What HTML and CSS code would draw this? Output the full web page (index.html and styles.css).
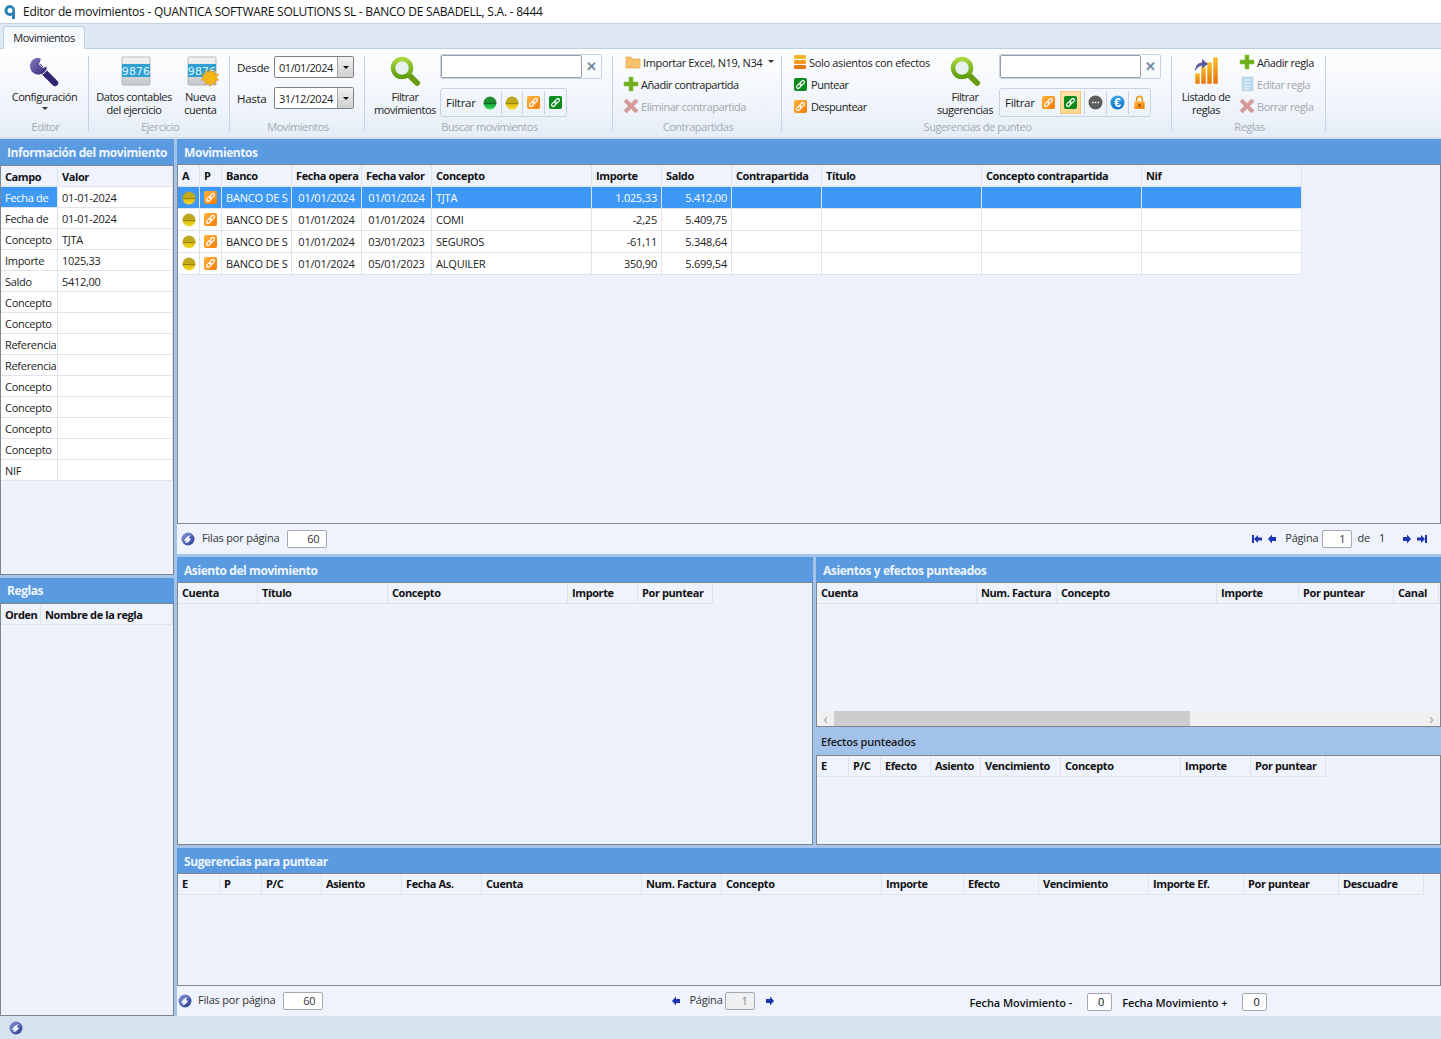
FILE: index.html
```html
<!DOCTYPE html>
<html lang="es">

<head>
    <meta charset="UTF-8">
    <title>Editor de movimientos</title>
    <link rel="stylesheet" href="styles.css">
</head>

<body>
    <!-- Iconos -->
    <svg class="defs" aria-hidden="true">
        <defs>
            <linearGradient id="gYellow" x1="0" y1="0" x2="0" y2="1">
                <stop offset="0" stop-color="#b9a52c"/><stop offset=".48" stop-color="#c4ab14"/><stop offset=".55" stop-color="#8d7c10"/><stop offset=".62" stop-color="#e0bf0c"/><stop offset="1" stop-color="#f4dc30"/>
            </linearGradient>
            <linearGradient id="gGreen" x1="0" y1="0" x2="0" y2="1">
                <stop offset="0" stop-color="#2c8f3c"/><stop offset=".48" stop-color="#1c8a30"/><stop offset=".55" stop-color="#0d5f20"/><stop offset=".62" stop-color="#18b03c"/><stop offset="1" stop-color="#3ada5c"/>
            </linearGradient>
            <linearGradient id="gOrange" x1="0" y1="0" x2="1" y2="1">
                <stop offset="0" stop-color="#ffb340"/><stop offset="1" stop-color="#f57c00"/>
            </linearGradient>
            <linearGradient id="gBar" x1="0" y1="0" x2="0" y2="1">
                <stop offset="0" stop-color="#fbc02d"/><stop offset="1" stop-color="#e8710a"/>
            </linearGradient>
            <linearGradient id="gLens" x1="0" y1="0" x2="0" y2="1">
                <stop offset="0" stop-color="#a8d63c"/><stop offset="1" stop-color="#5f9e12"/>
            </linearGradient>
            <linearGradient id="gBlue" x1="0" y1="0" x2="0" y2="1">
                <stop offset="0" stop-color="#3aa8e8"/><stop offset="1" stop-color="#0f6fc0"/>
            </linearGradient>
            <linearGradient id="gGlobe" x1="0" y1="0" x2="1" y2="1">
                <stop offset="0" stop-color="#8a98d8"/><stop offset="1" stop-color="#24378f"/>
            </linearGradient>
            <linearGradient id="gPurple" x1="0" y1="0" x2="1" y2="1">
                <stop offset="0" stop-color="#8a7cc4"/><stop offset="1" stop-color="#2f2570"/>
            </linearGradient>
            <linearGradient id="gSilver" x1="0" y1="0" x2="0" y2="1">
                <stop offset="0" stop-color="#f4f4f4"/><stop offset="1" stop-color="#c4c7ca"/>
            </linearGradient>
            <g id="chain">
                <g transform="rotate(-45 6.500 6.500)" fill="none" stroke="#fff" stroke-width="1.200">
                    <rect x="1.500" y="5" width="5.500" height="3" rx="1.500"/>
                    <rect x="6" y="5" width="5.500" height="3" rx="1.500"/>
                </g>
            </g>
        </defs>
        <symbol id="i-wrench" viewBox="0 0 32 32">
            <path d="M10 12 26 28" stroke="#fff" stroke-width="9" stroke-linecap="round"/>
            <path d="M10 12 26 28" stroke="#2f2570" stroke-width="6.500" stroke-linecap="round"/>
            <path d="M7 2.500A9 9 0 1 0 18.500 11l-5 1.500-3-3 2-6A9 9 0 0 0 7 2.500z" fill="url(#gPurple)" stroke="#fff" stroke-width="1"/>
        </symbol>
        <symbol id="i-card" viewBox="0 0 32 32">
            <rect x="2" y="2" width="28" height="28" rx="1" fill="url(#gSilver)" stroke="#b4b8bc"/>
            <rect x="2" y="9" width="28" height="13" fill="#2f9fd2"/>
        </symbol>
        <symbol id="i-star" viewBox="0 0 18 18">
            <path d="M9 0l1.600 3.600L14 1.500l-.5 4 4.500-.2-2.800 3 2.800 2.900-4.100.4.700 4.200-3.600-2-2 3.600-1.600-3.800-3.600 2 .6-4.200L0 11l3-2.800L.4 5.200l4.200.2L4 1.500l3.400 2.100z" fill="#f5b50f" stroke="#e08a00" stroke-width=".5"/>
        </symbol>
        <symbol id="i-lens" viewBox="0 0 32 32">
            <path d="M20 20 28 28" stroke="#6a9c18" stroke-width="6" stroke-linecap="round"/>
            <circle cx="13" cy="13" r="9" fill="#e8f0ee" stroke="url(#gLens)" stroke-width="4.500"/>
        </symbol>
        <symbol id="i-coin" viewBox="0 0 14 14"><circle cx="7" cy="7" r="6.500" fill="url(#gYellow)"/></symbol>
        <symbol id="i-green" viewBox="0 0 14 14"><circle cx="7" cy="7" r="6.500" fill="url(#gGreen)"/></symbol>
        <symbol id="i-link-o" viewBox="0 0 13 13">
            <rect width="13" height="13" rx="2" fill="url(#gOrange)"/>
            <use href="#chain"/>
        </symbol>
        <symbol id="i-link-g" viewBox="0 0 13 13">
            <rect width="13" height="13" rx="2" fill="#0a8a1a"/>
            <use href="#chain"/>
        </symbol>
        <symbol id="i-plus" viewBox="0 0 16 16">
            <path d="M6 1h4v5h5v4h-5v5H6v-5H1V6h5z" fill="#6fae1e" stroke="#8cc63f" stroke-width=".6"/>
        </symbol>
        <symbol id="i-cross" viewBox="0 0 16 16">
            <path d="M3.500 1 8 5.500 12.500 1 15 3.500 10.500 8 15 12.500 12.500 15 8 10.500 3.500 15 1 12.500 5.500 8 1 3.500z" fill="#d69a9a" stroke="#c98888" stroke-width=".5"/>
        </symbol>
        <symbol id="i-folder" viewBox="0 0 16 16">
            <path d="M1 3h5l1 2h8v9H1z" fill="#f5c26b" stroke="#e0a040" stroke-width=".6"/>
        </symbol>
        <symbol id="i-stack" viewBox="0 0 14 16">
            <rect x="1" y="1" width="12" height="4" rx="1.500" fill="#f9b52c"/>
            <rect x="1" y="6" width="12" height="4" rx="1.500" fill="#f59a1c"/>
            <rect x="1" y="11" width="12" height="4" rx="1.500" fill="#e8760c"/>
        </symbol>
        <symbol id="i-chart" viewBox="0 0 32 32">
            <rect x="5" y="18" width="5" height="11" fill="url(#gBar)" stroke="#fff" stroke-width=".5"/>
            <rect x="11" y="12" width="5" height="17" fill="url(#gBar)" stroke="#fff" stroke-width=".5"/>
            <rect x="17" y="7" width="5" height="22" fill="url(#gBar)" stroke="#fff" stroke-width=".5"/>
            <rect x="23" y="2" width="5" height="27" fill="url(#gBar)" stroke="#fff" stroke-width=".5"/>
            <path d="M5 16c0-5 3-8 7-8.500V4l6 5-6 4.500V10.500c-3 .5-5 2.500-7 5.500z" fill="#5c5a9c"/>
        </symbol>
        <symbol id="i-doc" viewBox="0 0 14 16">
            <rect x="2" y="1" width="11" height="14" fill="#b5d6ee" stroke="#cfdce6"/>
            <path d="M4 4h7M4 7h7M4 10h7M4 13h5" stroke="#f2f8fc"/>
        </symbol>
        <symbol id="i-dots" viewBox="0 0 15 15">
            <circle cx="7.500" cy="7.500" r="7" fill="#5d5d5d"/>
            <path d="M4 7.500h1.500M6.800 7.500h1.500M9.600 7.500h1.500" stroke="#fff" stroke-width="1.500"/>
        </symbol>
        <symbol id="i-lock" viewBox="0 0 13 16">
            <path d="M3.500 7V4.500a3 3 0 0 1 6 0V7" fill="none" stroke="#e8a020" stroke-width="1.800"/>
            <rect x="1" y="7" width="11" height="8" rx="1" fill="url(#gOrange)"/>
            <rect x="5.500" y="9.500" width="2" height="3" fill="#8a4a00"/>
        </symbol>
        <symbol id="i-globe" viewBox="0 0 14 14">
            <circle cx="7" cy="7" r="6.500" fill="url(#gGlobe)"/>
            <path d="M3 9c1-3 3-5 7-6-1 1-2 2-2 3l2 1c-1 2-3 4-6 4 1-1 1-2 1-2z" fill="#eef2ff"/>
        </symbol>
        <symbol id="i-first" viewBox="0 0 12 10"><path d="M1 1h2v8H1zM3 5l4-4v2.500h4v3H7V9z" fill="#1c35b0"/></symbol>
        <symbol id="i-prev" viewBox="0 0 10 10"><path d="M1 5l4-4.500V3h4v4H5v2.500z" fill="#1c35b0"/></symbol>
        <symbol id="i-next" viewBox="0 0 10 10"><path d="M9 5L5 .5V3H1v4h4v2.500z" fill="#1c35b0"/></symbol>
        <symbol id="i-last" viewBox="0 0 12 10"><path d="M11 1H9v8h2zM9 5L5 1v2.500H1v3h4V9z" fill="#1c35b0"/></symbol>
    </svg>

    <div class="titlebar">
        <svg class="app-logo" viewBox="0 0 14 16">
            <path d="M7 1a5.500 5.500 0 1 0 2 10.600V15h3V6.500A5.500 5.500 0 0 0 7 1zm0 3a2.500 2.500 0 1 1 0 5 2.500 2.500 0 0 1 0-5z" fill="#2d7fb8"/>
        </svg>
        <span>Editor de movimientos - QUANTICA SOFTWARE SOLUTIONS SL - BANCO DE SABADELL, S.A. - 8444</span>
    </div>

    <div class="tabstrip">
        <div class="tab">Movimientos</div>
    </div>

    <div class="ribbon">
        <section class="group g-editor">
            <div class="group-body center">
                <div class="bigbtn">
                    <svg class="ico32"><use href="#i-wrench"/></svg>
                    <span>Configuración</span>
                    <span class="caret"></span>
                </div>
            </div>
            <div class="group-label">Editor</div>
        </section>

        <section class="group g-ejercicio">
            <div class="group-body center gap-ej">
                <div class="bigbtn">
                    <svg class="ico32 card-a" viewBox="0 0 32 32"><use href="#i-card"/><text x="16" y="20" text-anchor="middle" class="card-num">9876</text></svg>
                    <span>Datos contables<br>del ejercicio</span>
                </div>
                <div class="bigbtn">
                    <span class="stacked">
                        <svg class="ico32" viewBox="0 0 32 32"><use href="#i-card"/><text x="16" y="20" text-anchor="middle" class="card-num">9876</text></svg>
                        <svg class="star"><use href="#i-star"/></svg>
                    </span>
                    <span>Nueva<br>cuenta</span>
                </div>
            </div>
            <div class="group-label">Ejercicio</div>
        </section>

        <section class="group g-fechas">
            <div class="group-body dates">
                <div class="date-row">
                    <label>Desde</label>
                    <div class="datebox"><span>01/01/2024</span><i class="drop"></i></div>
                </div>
                <div class="date-row">
                    <label>Hasta</label>
                    <div class="datebox"><span>31/12/2024</span><i class="drop"></i></div>
                </div>
            </div>
            <div class="group-label">Movimientos</div>
        </section>

        <section class="group g-buscar">
            <div class="group-body search-body">
                <div class="bigbtn w-filter">
                    <svg class="ico32"><use href="#i-lens"/></svg>
                    <span>Filtrar<br>movimientos</span>
                </div>
                <div class="search-col">
                    <div class="searchbox"><div class="search-input"></div><div class="search-clear">✕</div></div>
                    <div class="filterbar fb-mov">
                        <span class="fb-label">Filtrar</span>
                        <span class="fb-item"><svg class="ico14"><use href="#i-green"/></svg></span>
                        <span class="fb-item"><svg class="ico14"><use href="#i-coin"/></svg></span>
                        <span class="fb-item"><svg class="ico13"><use href="#i-link-o"/></svg></span>
                        <span class="fb-item"><svg class="ico13"><use href="#i-link-g"/></svg></span>
                    </div>
                </div>
            </div>
            <div class="group-label">Buscar movimientos</div>
        </section>

        <section class="group g-contra">
            <div class="group-body list-body">
                <div class="listbtn folder"><svg class="ico16"><use href="#i-folder"/></svg><span>Importar Excel, N19, N34</span><i class="caret-small"></i></div>
                <div class="listbtn"><svg class="ico16"><use href="#i-plus"/></svg><span>Añadir contrapartida</span></div>
                <div class="listbtn off"><svg class="ico16"><use href="#i-cross"/></svg><span>Eliminar contrapartida</span></div>
            </div>
            <div class="group-label">Contrapartidas</div>
        </section>

        <section class="group g-sug">
            <div class="group-body search-body">
                <div class="list-body sug-list">
                    <div class="listbtn stackbtn"><svg class="ico16"><use href="#i-stack"/></svg><span>Solo asientos con efectos</span></div>
                    <div class="listbtn"><svg class="ico13"><use href="#i-link-g"/></svg><span>Puntear</span></div>
                    <div class="listbtn"><svg class="ico13"><use href="#i-link-o"/></svg><span>Despuntear</span></div>
                </div>
                <div class="bigbtn w-filter2">
                    <svg class="ico32"><use href="#i-lens"/></svg>
                    <span>Filtrar<br>sugerencias</span>
                </div>
                <div class="search-col">
                    <div class="searchbox"><div class="search-input"></div><div class="search-clear">✕</div></div>
                    <div class="filterbar fb-sug">
                        <span class="fb-label">Filtrar</span>
                        <span class="fb-item"><svg class="ico13"><use href="#i-link-o"/></svg></span>
                        <span class="fb-item active"><svg class="ico13"><use href="#i-link-g"/></svg></span>
                        <span class="fb-item"><svg class="ico15"><use href="#i-dots"/></svg></span>
                        <span class="fb-item"><svg class="ico15" viewBox="0 0 15 15"><circle cx="7.500" cy="7.500" r="7" fill="url(#gBlue)"/><text x="7.500" y="11.500" text-anchor="middle" class="euro-sign">€</text></svg></span>
                        <span class="fb-item"><svg class="ico15"><use href="#i-lock"/></svg></span>
                    </div>
                </div>
            </div>
            <div class="group-label">Sugerencias de punteo</div>
        </section>

        <section class="group g-reglas">
            <div class="group-body search-body">
                <div class="bigbtn w-listado">
                    <svg class="ico32"><use href="#i-chart"/></svg>
                    <span>Listado de<br>reglas</span>
                </div>
                <div class="list-body reglas-list">
                    <div class="listbtn"><svg class="ico16"><use href="#i-plus"/></svg><span>Añadir regla</span></div>
                    <div class="listbtn off"><svg class="ico16"><use href="#i-doc"/></svg><span>Editar regla</span></div>
                    <div class="listbtn off"><svg class="ico16"><use href="#i-cross"/></svg><span>Borrar regla</span></div>
                </div>
            </div>
            <div class="group-label">Reglas</div>
        </section>
    </div>

    <div class="workspace">
        <aside class="left">
            <div class="panel p-info">
                <h2>Información del movimiento</h2>
                <div class="gridbox">
                    <table class="grid">
                        <colgroup><col class="w57"><col class="w115"></colgroup>
                        <thead><tr><th>Campo</th><th>Valor</th></tr></thead>
                        <tbody class="rows21">
                            <tr><td class="sel">Fecha de</td><td>01-01-2024</td></tr>
                            <tr><td>Fecha de</td><td>01-01-2024</td></tr>
                            <tr><td>Concepto</td><td>TJTA</td></tr>
                            <tr><td>Importe</td><td>1025,33</td></tr>
                            <tr><td>Saldo</td><td>5412,00</td></tr>
                            <tr><td>Concepto</td><td></td></tr>
                            <tr><td>Concepto</td><td></td></tr>
                            <tr><td>Referencia</td><td></td></tr>
                            <tr><td>Referencia</td><td></td></tr>
                            <tr><td>Concepto</td><td></td></tr>
                            <tr><td>Concepto</td><td></td></tr>
                            <tr><td>Concepto</td><td></td></tr>
                            <tr><td>Concepto</td><td></td></tr>
                            <tr><td>NIF</td><td></td></tr>
                        </tbody>
                    </table>
                </div>
            </div>
            <div class="panel p-reglas">
                <h2>Reglas</h2>
                <div class="gridbox">
                    <table class="grid">
                        <colgroup><col class="w40"><col class="w132"></colgroup>
                        <thead><tr><th>Orden</th><th>Nombre de la regla</th></tr></thead>
                    </table>
                </div>
            </div>
        </aside>

        <main class="right">
            <div class="panel p-mov">
                <h2>Movimientos</h2>
                <div class="gridbox">
                    <table class="grid g-mov">
                        <colgroup>
                            <col class="w22"><col class="w22"><col class="w70"><col class="w70"><col class="w70"><col class="w160"><col class="w70"><col class="w70"><col class="w90"><col class="w160"><col class="w160"><col class="w160">
                        </colgroup>
                        <thead>
                            <tr><th>A</th><th>P</th><th>Banco</th><th>Fecha opera</th><th>Fecha valor</th><th>Concepto</th><th>Importe</th><th>Saldo</th><th>Contrapartida</th><th>Título</th><th>Concepto contrapartida</th><th>Nif</th></tr>
                        </thead>
                        <tbody class="rows22">
                            <tr class="sel">
                                <td class="ic"><svg class="ico14"><use href="#i-coin"/></svg></td><td class="ic"><svg class="ico13"><use href="#i-link-o"/></svg></td>
                                <td>BANCO DE S</td><td class="mid">01/01/2024</td><td class="mid">01/01/2024</td><td>TJTA</td><td class="num">1.025,33</td><td class="num">5.412,00</td><td></td><td></td><td></td><td></td>
                            </tr>
                            <tr>
                                <td class="ic"><svg class="ico14"><use href="#i-coin"/></svg></td><td class="ic"><svg class="ico13"><use href="#i-link-o"/></svg></td>
                                <td>BANCO DE S</td><td class="mid">01/01/2024</td><td class="mid">01/01/2024</td><td>COMI</td><td class="num">-2,25</td><td class="num">5.409,75</td><td></td><td></td><td></td><td></td>
                            </tr>
                            <tr>
                                <td class="ic"><svg class="ico14"><use href="#i-coin"/></svg></td><td class="ic"><svg class="ico13"><use href="#i-link-o"/></svg></td>
                                <td>BANCO DE S</td><td class="mid">01/01/2024</td><td class="mid">03/01/2023</td><td>SEGUROS</td><td class="num">-61,11</td><td class="num">5.348,64</td><td></td><td></td><td></td><td></td>
                            </tr>
                            <tr>
                                <td class="ic"><svg class="ico14"><use href="#i-coin"/></svg></td><td class="ic"><svg class="ico13"><use href="#i-link-o"/></svg></td>
                                <td>BANCO DE S</td><td class="mid">01/01/2024</td><td class="mid">05/01/2023</td><td>ALQUILER</td><td class="num">350,90</td><td class="num">5.699,54</td><td></td><td></td><td></td><td></td>
                            </tr>
                        </tbody>
                    </table>
                </div>
                <div class="pager">
                    <svg class="ico14 globe"><use href="#i-globe"/></svg>
                    <span class="pg-label">Filas por página</span>
                    <span class="numbox ml8">60</span>
                    <span class="pager-right">
                        <svg class="arrow-w"><use href="#i-first"/></svg>
                        <svg class="arrow-n"><use href="#i-prev"/></svg>
                        <span class="pg-label ml6">Página</span>
                        <span class="numbox page">1</span>
                        <span class="pg-label">de</span>
                        <span class="pg-label ml9">1</span>
                        <svg class="arrow-n ml17"><use href="#i-next"/></svg>
                        <svg class="arrow-w"><use href="#i-last"/></svg>
                    </span>
                </div>
            </div>

            <div class="mid-row">
                <div class="panel p-asiento">
                    <h2>Asiento del movimiento</h2>
                    <div class="gridbox">
                        <table class="grid">
                            <colgroup><col class="w80"><col class="w130"><col class="w180"><col class="w70"><col class="w75"></colgroup>
                            <thead><tr><th>Cuenta</th><th>Título</th><th>Concepto</th><th>Importe</th><th>Por puntear</th></tr></thead>
                        </table>
                    </div>
                </div>
                <div class="panel p-efectos">
                    <h2>Asientos y efectos punteados</h2>
                    <div class="gridbox gb-top">
                        <table class="grid">
                            <colgroup><col class="w160"><col class="w80"><col class="w160"><col class="w82"><col class="w95"><col class="w45"></colgroup>
                            <thead><tr><th>Cuenta</th><th>Num. Factura</th><th>Concepto</th><th>Importe</th><th>Por puntear</th><th>Canal</th></tr></thead>
                        </table>
                        <div class="hscroll">
                            <span class="hs-arrow">‹</span>
                            <span class="hs-thumb"></span>
                            <span class="hs-arrow hs-end">›</span>
                        </div>
                    </div>
                    <h3>Efectos punteados</h3>
                    <div class="gridbox gb-bottom">
                        <table class="grid">
                            <colgroup><col class="w32"><col class="w32"><col class="w50"><col class="w50"><col class="w80"><col class="w120"><col class="w70"><col class="w75"></colgroup>
                            <thead><tr><th>E</th><th>P/C</th><th>Efecto</th><th>Asiento</th><th>Vencimiento</th><th>Concepto</th><th>Importe</th><th>Por puntear</th></tr></thead>
                        </table>
                    </div>
                </div>
            </div>

            <div class="panel p-sug">
                <h2>Sugerencias para puntear</h2>
                <div class="gridbox">
                    <table class="grid">
                        <colgroup>
                            <col class="w42"><col class="w42"><col class="w60"><col class="w80"><col class="w80"><col class="w160"><col class="w80"><col class="w160"><col class="w82"><col class="w75"><col class="w110"><col class="w95"><col class="w95"><col class="w85">
                        </colgroup>
                        <thead><tr><th>E</th><th>P</th><th>P/C</th><th>Asiento</th><th>Fecha As.</th><th>Cuenta</th><th>Num. Factura</th><th>Concepto</th><th>Importe</th><th>Efecto</th><th>Vencimiento</th><th>Importe Ef.</th><th>Por puntear</th><th>Descuadre</th></tr></thead>
                    </table>
                </div>
                <div class="pager pager-sug">
                    <svg class="ico14"><use href="#i-globe"/></svg>
                    <span class="pg-label ml6">Filas por página</span>
                    <span class="numbox ml8">60</span>
                    <span class="pager-mid">
                        <svg class="arrow-n"><use href="#i-prev"/></svg>
                        <span class="pg-label ml6">Página</span>
                        <span class="numbox page off">1</span>
                        <svg class="arrow-n ml10"><use href="#i-next"/></svg>
                    </span>
                    <span class="pager-dates">
                        <b>Fecha Movimiento -</b>
                        <span class="numbox small">0</span>
                        <b class="ml10">Fecha Movimiento +</b>
                        <span class="numbox small">0</span>
                    </span>
                </div>
            </div>
        </main>
    </div>

    <footer class="statusbar">
        <svg class="ico14"><use href="#i-globe"/></svg>
    </footer>
</body>

</html>
```

FILE: styles.css
```css
* {
    box-sizing: border-box;
}

html, body {
    margin: 0;
    padding: 0;
}

body {
    width: 1441px;
    height: 1039px;
    overflow: hidden;
    display: flex;
    flex-direction: column;
    font-family: "Open Sans", "Noto Sans", sans-serif;
    font-size: 11px;
    letter-spacing: -0.2px;
    color: #1a1a1a;
    background-color: #d7e2ef;
}

.defs {
    display: block;
    width: 0;
    height: 0;
}

.card-num {
    font-family: "DejaVu Sans", sans-serif;
    font-size: 11px;
    letter-spacing: 0.1px;
    fill: #dff4ff;
}

.euro-sign {
    font-family: "Liberation Sans", sans-serif;
    font-size: 12px;
    font-weight: bold;
    letter-spacing: 0;
    fill: #fff;
}

.ico32 { width: 32px; height: 32px; display: block; }
.ico16 { width: 16px; height: 16px; flex: none; }
.ico15 { width: 15px; height: 15px; flex: none; }
.ico14 { width: 14px; height: 14px; flex: none; }
.ico13 { width: 13px; height: 13px; flex: none; }

/* Titelzeile */
.titlebar {
    height: 24px;
    flex: none;
    display: flex;
    align-items: center;
    gap: 6px;
    padding-left: 3px;
    background-color: #fff;
    font-size: 12px;
    letter-spacing: -0.24px;
    color: #111;
    border-bottom: 1px solid #c6d3e3;
}

.app-logo {
    width: 14px;
    height: 16px;
}

.tabstrip {
    height: 25px;
    flex: none;
    padding: 2px 0 0 3px;
    background-color: #dfe8f3;
    border-bottom: 1px solid #b9cde4;
}

.tab {
    width: 82px;
    height: 23px;
    line-height: 22px;
    text-align: center;
    letter-spacing: -0.45px;
    background: linear-gradient(#f2f6fb, #fafcfe);
    border: 1px solid #c0d0e4;
    border-bottom: none;
    border-radius: 3px 3px 0 0;
    color: #222;
}

/* Ribbon */
.ribbon {
    height: 90px;
    flex: none;
    display: flex;
    padding-top: 7px;
    letter-spacing: -0.45px;
    background: linear-gradient(#fefefe, #f1f5fb 60%, #e6edf7);
    border-bottom: 2px solid #d4e0ee;
}

.group {
    display: flex;
    flex-direction: column;
    height: 75px;
    border-right: 1px solid #c3d2e4;
}

.group-body {
    flex: none;
    height: 64px;
    margin-top: -1px;
    display: flex;
}

.center {
    justify-content: center;
}

.group-label {
    height: 12px;
    line-height: 16px;
    padding-left: 2px;
    text-align: center;
    white-space: nowrap;
    color: #a3abb5;
}

.g-editor { width: 89px; padding-left: 1px; }
.g-ejercicio { width: 141px; }
.g-fechas { width: 135px; }
.g-buscar { width: 248px; }
.g-contra { width: 169px; }
.g-sug { width: 390px; }
.g-reglas { width: 154px; }

.gap-ej {
    gap: 11px;
    padding-right: 4px;
}

.card-a {
    margin-left: 5px;
}

.bigbtn {
    display: flex;
    flex-direction: column;
    align-items: center;
    text-align: center;
    line-height: 12.500px;
    gap: 4px;
    color: #222;
}

.stacked {
    display: flex;
    margin-left: 3px;
    position: relative;
}

.star {
    position: absolute;
    right: -1px;
    bottom: 0;
    width: 18px;
    height: 18px;
}

.caret {
    width: 0;
    height: 0;
    margin-top: -1px;
    border: 3px solid transparent;
    border-top-color: #333;
}

.caret-small {
    width: 0;
    height: 0;
    margin: 2px 0 0 4px;
    border: 3px solid transparent;
    border-top-color: #333;
}

.dates {
    flex-direction: column;
    gap: 9px;
    padding: 1px 0 0 7px;
}

.date-row {
    display: flex;
    align-items: center;
    justify-content: space-between;
    width: 117px;
    letter-spacing: -0.45px;
}

.date-row label {
    font-size: 11.500px;
    letter-spacing: -0.3px;
}

.datebox {
    width: 80px;
    height: 22px;
    display: flex;
    align-items: center;
    padding-left: 4px;
    background-color: #fff;
    border: 1px solid #7d8288;
    border-radius: 2px;
}

.datebox span {
    flex: 1;
}

.drop {
    width: 16px;
    height: 20px;
    display: flex;
    align-items: center;
    justify-content: center;
    background: linear-gradient(#f2f2f2, #cfcfcf);
    border-left: 1px solid #a0a4a8;
}

.drop::after {
    content: "";
    margin-top: 3px;
    border: 3.500px solid transparent;
    border-top-color: #111;
}

.search-body {
    gap: 5px;
}

.w-filter {
    width: 60px;
    margin-left: 10px;
}

.w-filter2 {
    width: 60px;
    margin-right: -1px;
}

.search-col {
    display: flex;
    flex-direction: column;
    gap: 9px;
    margin-top: -1px;
}

.searchbox {
    width: 162px;
    height: 25px;
    display: flex;
    border: 1px solid #c5d3e5;
    border-radius: 2px;
}

.search-input {
    width: 141px;
    background-color: #fff;
    border: 1px solid #9a9ea4;
    border-radius: 2px;
}

.search-clear {
    flex: 1;
    text-align: center;
    line-height: 23px;
    font-size: 13px;
    font-weight: bold;
    color: #6f8aa2;
}

.filterbar {
    height: 29px;
    display: flex;
    align-items: center;
    padding-left: 5px;
    border: 1px solid #c5d3e5;
    border-radius: 3px;
}

.fb-mov { width: 127px; }
.fb-sug { width: 152px; }

.fb-label {
    width: 33px;
    font-size: 11.500px;
    letter-spacing: -0.3px;
}

.fb-item {
    width: 22px;
    height: 23px;
    display: flex;
    align-items: center;
    justify-content: center;
    border-left: 1px solid #c5d3e5;
}

.fb-label + .fb-item {
    border-left: none;
}

.fb-item.active {
    margin-right: 3px;
    background: linear-gradient(#fde3a8, #fbd68c);
    border: 1px solid #f5c57a;
}

.list-body {
    display: flex;
    flex-direction: column;
    gap: 6px;
    margin-top: -1px;
}

.group-body.list-body {
    margin-top: -2px;
    height: 65px;
}

.g-contra .list-body {
    padding-left: 10px;
}

.sug-list {
    width: 148px;
    padding-left: 10px;
}

.reglas-list {
    margin-left: -2px;
}

.listbtn {
    height: 16px;
    display: flex;
    align-items: center;
    gap: 2px;
    color: #222;
    white-space: nowrap;
}

.listbtn.off {
    color: #a2a6ac;
}

.listbtn.folder {
    padding-left: 2px;
    gap: 2px;
    letter-spacing: -0.35px;
}

.sug-list .listbtn {
    gap: 4px;
    padding-left: 2px;
}

.sug-list .stackbtn {
    gap: 1px;
    padding-left: 0;
    letter-spacing: -0.33px;
}

.w-listado {
    width: 60px;
    margin-left: 4px;
}

/* Arbeitsbereich */
.workspace {
    flex: 1;
    min-height: 0;
    display: flex;
    gap: 3px;
    background-color: #a6c4ea;
}

.left {
    width: 174px;
    flex: none;
    display: flex;
    flex-direction: column;
    gap: 3px;
}

.right {
    flex: 1;
    min-width: 0;
    display: flex;
    flex-direction: column;
    gap: 3px;
}

.panel {
    display: flex;
    flex-direction: column;
    min-height: 0;
    background-color: #eef3fd;
}

.panel h2 {
    height: 25px;
    flex: none;
    margin: 0;
    padding-left: 7px;
    line-height: 27px;
    font-size: 12px;
    font-weight: 700;
    letter-spacing: -0.42px;
    white-space: nowrap;
    color: #eef5fe;
    background-color: #5a9ae0;
}

.p-info h2 {
    height: 26px;
}

.p-reglas h2 {
    line-height: 25px;
}

.panel h3 {
    height: 28px;
    flex: none;
    margin: 0;
    padding-left: 5px;
    line-height: 30px;
    font-size: 11px;
    font-weight: 600;
    color: #1a1a1a;
    background-color: #a3c2ea;
}

.p-info { height: 436px; }
.p-reglas { flex: 1; }
.p-mov { height: 415px; }
.p-sug { flex: 1; }

.mid-row {
    height: 288px;
    flex: none;
    display: flex;
    gap: 3px;
}

.p-asiento { width: 636px; flex: none; }
.p-efectos { flex: 1; min-width: 0; }

.gridbox {
    flex: 1;
    min-height: 0;
    overflow: hidden;
    background-color: #edf2fb;
    border: 1px solid #7f868e;
}

.gb-top {
    display: flex;
    flex-direction: column;
    flex: none;
    height: 145px;
}

.gb-bottom {
    flex: 1;
}

.grid {
    table-layout: fixed;
    border-collapse: separate;
    border-spacing: 0;
    width: min-content;
}

.grid th,
.grid td {
    padding: 0 4px;
    text-align: left;
    white-space: nowrap;
    overflow: hidden;
    border-right: 1px solid #dfe3ec;
    border-bottom: 1px solid #dfe3ec;
}

.grid th {
    height: 21px;
    font-weight: 700;
    letter-spacing: -0.4px;
    color: #111;
    background-color: #eef3fd;
}

.g-mov th {
    height: 22px;
    padding-bottom: 1px;
}

.mid-row .grid th,
.p-sug .grid th {
    padding-bottom: 2px;
}

.grid td {
    background-color: #fff;
    color: #222;
    letter-spacing: -0.3px;
}

.g-mov td {
    letter-spacing: -0.2px;
}

.rows21 td { height: 21px; }
.rows22 td { height: 22px; }

.grid td.sel,
.grid tr.sel td {
    background-color: #3d99f5;
    color: #fff;
}

.grid .num { text-align: right; }
.grid .mid { text-align: center; }

.grid .ic {
    padding: 0;
    text-align: center;
}

.grid .ic svg {
    display: block;
    margin: 0 auto;
}

.w22 { width: 22px; }
.w32 { width: 32px; }
.w40 { width: 40px; }
.w42 { width: 42px; }
.w45 { width: 45px; }
.w50 { width: 50px; }
.w57 { width: 57px; }
.w60 { width: 60px; }
.w70 { width: 70px; }
.w75 { width: 75px; }
.w80 { width: 80px; }
.w82 { width: 82px; }
.w85 { width: 85px; }
.w90 { width: 90px; }
.w95 { width: 95px; }
.w110 { width: 110px; }
.w115 { width: 115px; }
.w120 { width: 120px; }
.w130 { width: 130px; }
.w132 { width: 132px; }
.w160 { width: 160px; }
.w180 { width: 180px; }

.hscroll {
    height: 15px;
    margin-top: auto;
    display: flex;
    align-items: center;
    background-color: #f0f0f0;
    color: #a0a0a0;
}

.hs-arrow {
    width: 17px;
    text-align: center;
    font-size: 14px;
    line-height: 14px;
}

.hs-thumb {
    width: 356px;
    height: 15px;
    background-color: #cdcdcd;
}

.hs-end {
    margin-left: auto;
}

/* Pager */
.pager {
    height: 30px;
    flex: none;
    display: flex;
    align-items: center;
    padding: 0 11px 0 4px;
    color: #333;
}

.pg-label {
    margin-top: -3px;
}

.globe {
    margin-right: 7px;
}

.numbox {
    width: 40px;
    height: 18px;
    line-height: 16px;
    padding-right: 7px;
    text-align: right;
    background-color: #fff;
    border: 1px solid #a4a9b0;
    border-radius: 2px;
}

.numbox.page {
    width: 30px;
    margin: 0 5px 0 4px;
    padding-right: 6px;
}

.numbox.off {
    background-color: #eef0f2;
    color: #888;
    margin: 0 0 0 2px;
}

.numbox.small {
    width: 25px;
    margin-left: 15px;
}

.pager-right {
    margin-left: auto;
    display: flex;
    align-items: center;
}

.arrow-w {
    width: 12px;
    height: 10px;
    margin: 0 2px;
}

.arrow-n {
    width: 10px;
    height: 10px;
    margin: 0 2px;
}

.ml6 { margin-left: 6px; }
.ml8 { margin-left: 8px; }
.ml9 { margin-left: 9px; }
.ml10 { margin-left: 10px; }
.ml17 { margin-left: 17px; }

.pager-sug {
    padding: 0 0 0 1px;
}

.pager-mid {
    display: flex;
    align-items: center;
    margin-left: 346px;
}

.pager-dates {
    display: flex;
    align-items: center;
    margin-left: 193px;
    padding-top: 2px;
    color: #111;
}

.pager-dates b {
    font-weight: 600;
    letter-spacing: -0.08px;
}

.statusbar {
    height: 23px;
    flex: none;
    display: flex;
    align-items: center;
    padding-left: 9px;
    background-color: #d7e2ef;
}
```
